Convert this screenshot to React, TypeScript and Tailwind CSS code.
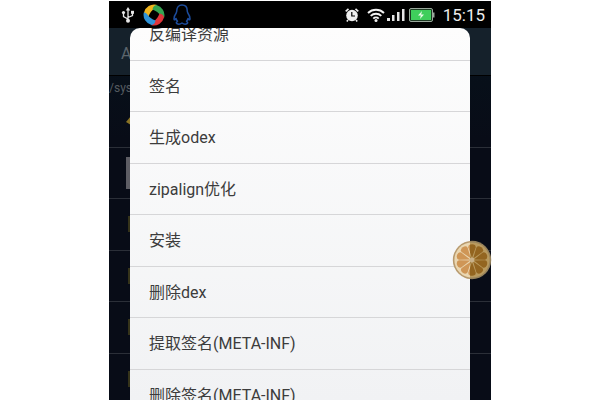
const MENU_ITEMS = [
  "反编译资源",
  "签名",
  "生成odex",
  "zipalign优化",
  "安装",
  "删除dex",
  "提取签名(META-INF)",
  "删除签名(META-INF)",
];

const FILE_ROWS = ["up", "image", "folder", "folder", "folder", "folder"];

const SEGMENTS = [0, 36, 72, 108, 144, 180, 216, 252, 288, 324];

function UsbIcon() {
  return (
    <svg width={14} height={16} viewBox="0 0 14 16" fill="none" stroke="#e8e8e8" strokeWidth={1.3} aria-hidden>
      <path d="M7 3v10M7 12 2.5 9.500V6M7 10.500l4.500-2V5.500" />
      <path d="M7 0 4.800 3.500h4.400z" fill="#e8e8e8" stroke="none" />
      <circle cx={2.5} cy={5.5} r={1.600} fill="#e8e8e8" stroke="none" />
      <path d="M10 3.800h3v3h-3z" fill="#e8e8e8" stroke="none" />
      <circle cx={7} cy={13.800} r={2} fill="#e8e8e8" stroke="none" />
    </svg>
  );
}

function SwirlIcon() {
  const petal = "M1 8.500A10.500 10.500 0 0 1 13.500.8Q14 2.500 11.500 4.500 7.500 7 5.500 12.500 1.500 12 1 8.500Z";
  return (
    <svg width={22} height={22} viewBox="0 0 22 22" aria-hidden>
      <path d={petal} fill="#efb41f" />
      <path d={petal} fill="#35a552" transform="rotate(90 11 11)" />
      <path d={petal} fill="#e0343a" transform="rotate(180 11 11)" />
      <path d={petal} fill="#2f93d8" transform="rotate(270 11 11)" />
    </svg>
  );
}

function PenguinIcon() {
  return (
    <svg width={18} height={21} viewBox="0 0 18 21" fill="none" stroke="#1c4c9c" strokeWidth={1.500} strokeLinejoin="round" aria-hidden>
      <path d="M9 1C5.500 1 3.800 3.500 3.800 6.500c0 1-.3 1.800-.6 2.500C1.800 11 .9 13 1 15c.1 1.300 1.200.8 2-.5.3 1.200.8 2 1.500 2.800-1.200.6-1.500 1.700-.7 2.200 1.300.8 3.800.5 5.200-.5 1.400 1 3.900 1.300 5.200.5.8-.5.5-1.600-.7-2.200.7-.8 1.200-1.600 1.500-2.800.8 1.300 1.900 1.800 2 .5.1-2-.8-4-2.200-6-.3-.7-.6-1.500-.6-2.500C14.200 3.500 12.500 1 9 1Z" />
    </svg>
  );
}

function AlarmIcon() {
  return (
    <svg width={14} height={14} viewBox="0 0 14 14" aria-hidden>
      <circle cx={7} cy={7.500} r={5.800} fill="#efefef" />
      <path d="M.7 3.300 3.500.8M13.300 3.300 10.500.8M3 12l-1.200 1.500M11 12l1.200 1.500" stroke="#efefef" strokeWidth={1.600} />
      <path d="M6.800 4v4h3.200" fill="none" stroke="#000" strokeWidth={1.200} />
    </svg>
  );
}

function WifiIcon() {
  return (
    <svg width={18} height={14} viewBox="0 0 18 14" fill="none" stroke="#f2f2f2" strokeWidth={1.900} aria-hidden>
      <path d="M1 5c4.500-4.300 11.500-4.300 16 0M3.700 7.900c3-2.900 7.600-2.900 10.600 0M6.300 10.600c1.500-1.500 3.900-1.500 5.400 0" />
      <circle cx={9} cy={12.400} r={1.500} fill="#f2f2f2" stroke="none" />
    </svg>
  );
}

function SignalIcon() {
  return (
    <svg width={18} height={13} viewBox="0 0 18 13" fill="#e6e6e6" aria-hidden>
      <path d="M0 10h3v3H0zM5 7h2.500v6H5zM10 4h2.500v9H10zM15 1h2.500v12H15z" />
    </svg>
  );
}

function BatteryIcon() {
  return (
    <svg width={26} height={14} viewBox="0 0 26 14" aria-hidden>
      <rect x={0.500} y={0.500} width={23} height={13} rx={1.500} fill="#1c3a22" stroke="#9aa89c" />
      <rect x={2} y={2} width={20} height={10} fill="#3fce5c" />
      <path d="M24 4.500h1.500v5H24z" fill="#9aa89c" />
      <path d="M13 3 9 7.500h2.800L11 11l4-4.500h-2.800z" fill="#e9fbe9" />
    </svg>
  );
}

function OrangeSlice({ rind, pith, pulp }: { rind: string; pith: string; pulp: string }) {
  return (
    <>
      <circle cx={20} cy={20} r={19.200} fill={rind} />
      <circle cx={20} cy={20} r={17.600} fill={pith} />
      {SEGMENTS.map((angle) => (
        <path
          key={angle}
          d="M20 18 16.300 7.500Q16 4.500 20 4.200 24 4.500 23.700 7.500Z"
          fill={pulp}
          transform={`rotate(${angle} 20 20)`}
        />
      ))}
      <circle cx={20} cy={20} r={2.400} fill="#c9b189" />
    </>
  );
}

function OrangeIcon() {
  return (
    <svg width={40} height={40} viewBox="0 0 40 40" aria-hidden>
      <defs>
        <clipPath id="over-menu">
          <path d="M0 0h18v40H0z" />
        </clipPath>
        <clipPath id="over-list">
          <path d="M18 0h22v40H18z" />
        </clipPath>
      </defs>
      <g clipPath="url(#over-menu)">
        <OrangeSlice rind="#b89a6e" pith="#ead7b2" pulp="#cf9656" />
      </g>
      <g clipPath="url(#over-list)">
        <OrangeSlice rind="#96825c" pith="#b99a5e" pulp="#936520" />
      </g>
    </svg>
  );
}

function StatusBar() {
  return (
    <header className="flex h-[27px] shrink-0 items-center bg-black pl-3 pr-1.5 text-white">
      <div className="flex items-center gap-2">
        <UsbIcon />
        <SwirlIcon />
        <PenguinIcon />
      </div>
      <div className="ml-auto flex items-center">
        <AlarmIcon />
        <div className="ml-2 flex items-center gap-0.5">
          <WifiIcon />
          <SignalIcon />
        </div>
        <div className="ml-1">
          <BatteryIcon />
        </div>
        <time className="ml-2 text-[17px] leading-6 text-[#ececec]">15:15</time>
      </div>
    </header>
  );
}

function FileList() {
  return (
    <div className="min-h-0 flex-1 overflow-hidden bg-linear-to-b from-[#06121b] to-[#080c17] to-30%">
      <div className="flex h-12 items-center border-b border-black bg-[#15212b] pl-3 pt-1 text-base text-[#5c656c]">
        A
      </div>
      <p className="h-5 pt-0.5 text-xs leading-5 text-[#555b60]">/sys</p>
      <ul className="grid h-[309px] auto-rows-fr">
        {FILE_ROWS.map((kind, i) => (
          <li key={i} className="flex items-center border-b border-[#2b2f38] pl-[17px]">
            {kind === "up" && (
              <svg width={12} height={12} viewBox="0 0 12 12" aria-hidden>
                <path d="M0 7 5 1v9z" fill="#8a7426" />
              </svg>
            )}
            {kind === "image" && <span className="h-8 w-6 bg-[#5d5d64]" />}
            {kind === "folder" && <span className="ml-0.5 h-4 w-6 bg-[#35331a]" />}
          </li>
        ))}
      </ul>
    </div>
  );
}

export default function App() {
  return (
    <div className="h-screen overflow-hidden bg-white pt-px font-['Roboto','Noto_Sans_CJK_SC',sans-serif]">
      <div className="mx-auto flex h-full w-full max-w-[382px] flex-col">
        <StatusBar />
        <main className="relative flex min-h-0 flex-1 flex-col">
          <FileList />

          {/* Context menu, scrolled down a little */}
          <div
            role="menu"
            className="absolute inset-y-0 left-[21px] right-[21px] overflow-hidden rounded-t-[10px] bg-linear-to-b from-[#fdfdfd] to-[#f1f2f4]"
          >
            <ul className="-mt-[19px] grid h-[412px] auto-rows-fr">
              {MENU_ITEMS.map((item) => (
                <li key={item} role="none" className="border-b border-[#d6d6d8]">
                  <button
                    type="button"
                    role="menuitem"
                    className="flex h-full w-full items-center px-[19px] pt-0.5 text-left text-base text-[#3c3c3c]"
                  >
                    {item}
                  </button>
                </li>
              ))}
            </ul>
          </div>

          {/* Floating assistant */}
          <button type="button" aria-label="悬浮球" className="absolute -right-px top-[212px]">
            <OrangeIcon />
          </button>
        </main>
      </div>
    </div>
  );
}
